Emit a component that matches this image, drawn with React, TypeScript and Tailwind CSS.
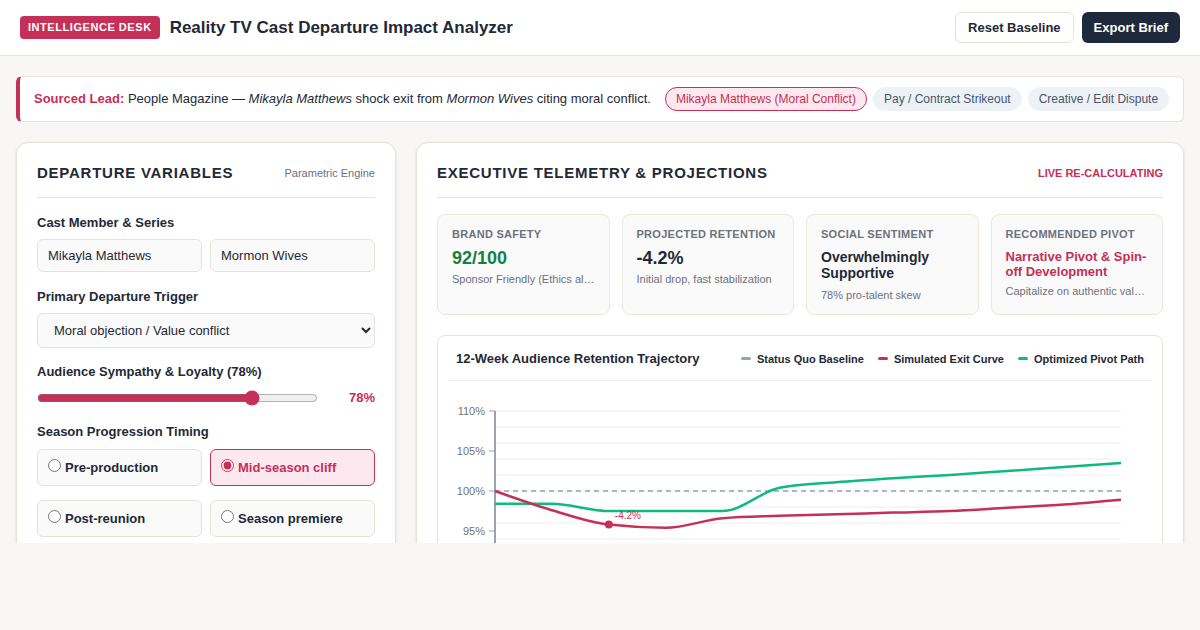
import React from "react";

const ROSE = "#c53058";

type Pt = [number, number];

// monotone cubic path, same idea as d3.curveMonotoneX
function monotonePath(pts: Pt[]): string {
  const n = pts.length;
  const sign = (v: number) => (v < 0 ? -1 : 1);
  const t: number[] = new Array(n).fill(0);
  for (let i = 1; i < n - 1; i++) {
    const [x0, y0] = pts[i - 1];
    const [x1, y1] = pts[i];
    const [x2, y2] = pts[i + 1];
    const h0 = x1 - x0, h1 = x2 - x1;
    const s0 = (y1 - y0) / h0, s1 = (y2 - y1) / h1;
    const p = (s0 * h1 + s1 * h0) / (h0 + h1);
    t[i] = (sign(s0) + sign(s1)) * Math.min(Math.abs(s0), Math.abs(s1), 0.5 * Math.abs(p)) || 0;
  }
  const endSlope = (a: Pt, b: Pt, tt: number) => {
    const h = b[0] - a[0];
    return h ? (3 * (b[1] - a[1]) / h - tt) / 2 : tt;
  };
  t[0] = endSlope(pts[0], pts[1], t[1]);
  t[n - 1] = endSlope(pts[n - 2], pts[n - 1], t[n - 2]);
  let d = `M${pts[0][0]},${pts[0][1]}`;
  for (let i = 0; i < n - 1; i++) {
    const [x0, y0] = pts[i];
    const [x1, y1] = pts[i + 1];
    const dx = (x1 - x0) / 3;
    d += ` C${x0 + dx},${y0 + dx * t[i]} ${x1 - dx},${y1 - dx * t[i + 1]} ${x1},${y1}`;
  }
  return d;
}

const exitCurve = [100, 97.6, 95.8, 95.4, 96.6, 96.9, 97.1, 97.3, 97.5, 97.9, 98.3, 98.9];
const pivotPath = [98.4, 98.4, 97.5, 97.5, 97.5, 100.4, 101.1, 101.6, 102, 102.5, 103, 103.5];

const AX = 47;
const XEND = 673;
const xFor = (i: number) => AX + (i * (XEND - AX)) / 11;
const yFor = (v: number) => 30 + (110 - v) * 8;

function Chart() {
  const grid = [110, 108, 106, 104, 102, 100, 98, 96, 94, 92, 90];
  const ticks = [110, 105, 100, 95, 90];
  const red = exitCurve.map((v, i) => [xFor(i), yFor(v)] as Pt);
  const green = pivotPath.map((v, i) => [xFor(i), yFor(v)] as Pt);
  return (
    <svg width="704" height="220" className="block">
      {grid.map((g) => (
        <line key={g} x1={AX} x2={XEND} y1={yFor(g)} y2={yFor(g)} stroke="#eeeeee" strokeWidth="1" />
      ))}
      <line x1={AX} x2={AX} y1={yFor(110)} y2={220} stroke="#9ca3af" strokeWidth="2" />
      {ticks.map((tk) => (
        <g key={tk}>
          <line x1={AX - 6} x2={AX} y1={yFor(tk)} y2={yFor(tk)} stroke="#9ca3af" strokeWidth="1" />
          <text x={AX - 10} y={yFor(tk) + 4} textAnchor="end" fontSize="11" fill="#737373" fontFamily="Liberation Sans, Arial, sans-serif">
            {tk}%
          </text>
        </g>
      ))}
      <line x1={AX} x2={XEND} y1={yFor(100)} y2={yFor(100)} stroke="#94a3b8" strokeWidth="1.5" strokeDasharray="5 4" />
      <path d={monotonePath(green)} fill="none" stroke="#10b981" strokeWidth="2.5" />
      <path d={monotonePath(red)} fill="none" stroke={ROSE} strokeWidth="2.5" />
      <circle cx={xFor(2)} cy={yFor(exitCurve[2])} r="4" fill={ROSE} />
      <text x={xFor(2) + 6} y={yFor(exitCurve[2]) - 6} fontSize="10" fill={ROSE} fontFamily="Liberation Sans, Arial, sans-serif">
        -4.2%
      </text>
    </svg>
  );
}

function Metric({ label, value, sub, valueClass }: { label: string; value: string; sub: string; valueClass: string }) {
  return (
    <div className="rounded-lg border border-[#ebe5dc] bg-[#fafafa] px-[14px] pt-[12px] pb-3 min-w-0">
      <div className="text-[11px] font-bold tracking-wide text-[#6b7280] leading-[14px]">{label}</div>
      <div className={valueClass}>{value}</div>
      <div className="truncate text-[11px] text-[#6b7280] leading-[14px]">{sub}</div>
    </div>
  );
}

function Radio({ label, checked }: { label: string; checked?: boolean }) {
  return (
    <label
      className={
        checked
          ? "block rounded-md border border-[#c53058] bg-[#fce8ee] px-2.5 py-[9px] text-[13px] leading-[17px] font-bold text-[#c53058]"
          : "block rounded-md border border-[#e8e3da] bg-[#fafafa] px-2.5 py-[9px] text-[13px] leading-[17px] font-bold text-[#1f2937]"
      }
    >
      <input type="radio" name="timing" defaultChecked={checked} className="mr-1 accent-[#c53058]" />
      {label}
    </label>
  );
}

export default function App() {
  return (
    <div className="h-[630px] bg-[#f8f7f5] text-[#1f2937]" style={{ fontFamily: "'Liberation Sans', Arial, sans-serif" }}>
      <div className="h-[543px] overflow-hidden">
        <header className="flex h-14 items-center justify-between border-b border-[#e7e3dc] bg-white px-5">
          <div className="flex items-center gap-2.5">
            <span className="rounded bg-[#c53058] px-2 py-[3px] text-[11px] font-bold tracking-wider text-white">INTELLIGENCE DESK</span>
            <h1 className="text-[17px] font-bold text-[#1f2937]">Reality TV Cast Departure Impact Analyzer</h1>
          </div>
          <div className="flex items-center gap-2">
            <button className="h-[31px] rounded-md border border-[#e8e2d6] bg-white px-3 text-[13px] font-bold text-[#1f2937]">Reset Baseline</button>
            <button className="h-[31px] rounded-md bg-[#1e293b] px-3 text-[13px] font-bold text-white">Export Brief</button>
          </div>
        </header>

        <main className="px-4 pt-5">
          <div className="flex h-[46px] items-center gap-3.5 rounded-md border border-l-4 border-[#e8e3da] border-l-[#c53058] bg-white pl-3.5 pr-3.5 text-[13px]">
            <p className="whitespace-nowrap text-[#1f2937]">
              <span className="font-bold text-[#c53058]">Sourced Lead:</span> People Magazine — <i>Mikayla Matthews</i> shock exit from{" "}
              <i>Mormon Wives</i> citing moral conflict.
            </p>
            <div className="ml-auto flex shrink-0 items-center gap-1.5">
              <span className="rounded-full border border-[#c53058] bg-[#fce8ee] px-2.5 py-[3px] text-xs text-[#c53058]">Mikayla Matthews (Moral Conflict)</span>
              <span className="rounded-full border border-[#eef2f7] bg-[#eef2f7] px-2.5 py-[3px] text-xs text-[#475569]">Pay / Contract Strikeout</span>
              <span className="rounded-full border border-[#eef2f7] bg-[#eef2f7] px-2.5 py-[3px] text-xs text-[#475569]">Creative / Edit Dispute</span>
            </div>
          </div>

          <div className="mt-5 flex gap-5">
            <section className="w-[380px] shrink-0 rounded-xl border border-[#e8e3da] bg-white p-5 shadow-sm">
              <div className="flex items-center justify-between border-b border-[#e8e3da] pb-[14px]">
                <h2 className="text-[15px] leading-5 font-bold tracking-wider">DEPARTURE VARIABLES</h2>
                <span className="text-[11px] text-[#6b7280]">Parametric Engine</span>
              </div>

              <div className="mt-[17px]">
                <div className="mb-2 text-[13px] leading-4 font-bold">Cast Member &amp; Series</div>
                <div className="grid grid-cols-2 gap-2">
                  <input defaultValue="Mikayla Matthews" className="h-[33px] rounded-md border border-[#e8e3da] bg-[#fafafa] px-2.5 text-[13px] text-[#1f2937]" />
                  <input defaultValue="Mormon Wives" className="h-[33px] rounded-md border border-[#e8e3da] bg-[#fafafa] px-2.5 text-[13px] text-[#1f2937]" />
                </div>
              </div>

              <div className="mt-[17px]">
                <div className="mb-2 text-[13px] leading-4 font-bold">Primary Departure Trigger</div>
                <select className="h-[35px] w-full rounded-md border border-[#e8e3da] bg-[#fafafa] px-3 text-[13px] text-[#1f2937]">
                  <option>Moral objection / Value conflict</option>
                </select>
              </div>

              <div className="mt-4">
                <div className="text-[13px] leading-4 font-bold">Audience Sympathy &amp; Loyalty (78%)</div>
                <div className="mt-2.5 flex h-4 items-center">
                  <input type="range" min={0} max={100} defaultValue={78} className="w-[281px] accent-[#c53058]" />
                  <span className="flex-1 text-right text-[13px] font-bold text-[#c53058]">78%</span>
                </div>
              </div>

              <div className="mt-[18px]">
                <div className="mb-[9px] text-[13px] leading-4 font-bold">Season Progression Timing</div>
                <div className="grid grid-cols-2 gap-x-2 gap-y-3.5">
                  <Radio label="Pre-production" />
                  <Radio label="Mid-season cliff" checked />
                  <Radio label="Post-reunion" />
                  <Radio label="Season premiere" />
                </div>
              </div>
            </section>

            <section className="min-w-0 flex-1 rounded-xl border border-[#e8e3da] bg-white p-5 shadow-sm">
              <div className="flex items-center justify-between border-b border-[#e8e3da] pb-[14px]">
                <h2 className="text-[15px] leading-5 font-bold tracking-wider">EXECUTIVE TELEMETRY &amp; PROJECTIONS</h2>
                <span className="text-[11px] font-bold text-[#c53058]">LIVE RE-CALCULATING</span>
              </div>

              <div className="mt-4 grid grid-cols-4 gap-3">
                <Metric label="BRAND SAFETY" value="92/100" sub="Sponsor Friendly (Ethics aligned)" valueClass="mt-[5px] mb-0.5 text-lg leading-6 font-bold text-[#15803d]" />
                <Metric label="PROJECTED RETENTION" value="-4.2%" sub="Initial drop, fast stabilization" valueClass="mt-[5px] mb-0.5 text-lg leading-6 font-bold text-[#1f2937]" />
                <Metric label="SOCIAL SENTIMENT" value="Overwhelmingly Supportive" sub="78% pro-talent skew" valueClass="mt-[8px] mb-[7px] text-sm leading-4 font-bold text-[#1f2937]" />
                <Metric label="RECOMMENDED PIVOT" value="Narrative Pivot & Spin-off Development" sub="Capitalize on authentic values narrative" valueClass="mt-[8px] mb-[5px] text-[13px] leading-[15px] font-bold text-[#c53058]" />
              </div>

              <div className="mt-5 rounded-lg border border-[#e8e3da] bg-white p-2.5">
                <div className="flex items-center justify-between border-b border-[#eeeeee] px-2 pt-[3px] pb-[11px]">
                  <h3 className="text-[13px] font-bold">12-Week Audience Retention Trajectory</h3>
                  <div className="flex items-center gap-3.5 text-[11px] font-bold">
                    <span className="flex items-center gap-1.5"><span className="h-[3px] w-2.5 rounded bg-[#94a3b8]" />Status Quo Baseline</span>
                    <span className="flex items-center gap-1.5"><span className="h-[3px] w-2.5 rounded bg-[#c53058]" />Simulated Exit Curve</span>
                    <span className="flex items-center gap-1.5"><span className="h-[3px] w-2.5 rounded bg-[#10b981]" />Optimized Pivot Path</span>
                  </div>
                </div>
                <Chart />
              </div>
            </section>
          </div>
        </main>
      </div>
    </div>
  );
}
